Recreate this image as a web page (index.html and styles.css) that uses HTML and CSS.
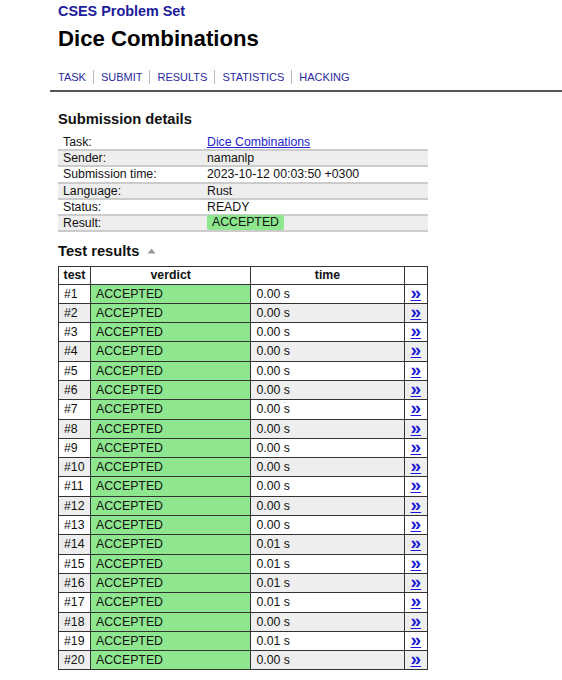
FILE: index.html
```html
<!DOCTYPE html>
<html lang="en">
<head>
  <meta charset="UTF-8">
  <title>CSES - Dice Combinations - Results</title>
  <link rel="stylesheet" href="styles.css">
</head>
<body>
  <div class="header">
    <a class="site-title" href="#">CSES Problem Set</a>
    <h1>Dice Combinations</h1>
    <div class="nav">
      <a href="#">TASK</a><span class="sep"></span>
      <a href="#">SUBMIT</a><span class="sep"></span>
      <a href="#">RESULTS</a><span class="sep"></span>
      <a href="#">STATISTICS</a><span class="sep"></span>
      <a href="#">HACKING</a>
    </div>
  </div>

  <div class="content">
    <h2>Submission details</h2>
    <table class="summary">
      <tr><td>Task:</td><td><a href="#">Dice Combinations</a></td></tr>
      <tr><td>Sender:</td><td>namanlp</td></tr>
      <tr><td>Submission time:</td><td>2023-10-12 00:03:50 +0300</td></tr>
      <tr><td>Language:</td><td>Rust</td></tr>
      <tr><td>Status:</td><td>READY</td></tr>
      <tr><td>Result:</td><td><span class="verdict-badge">ACCEPTED</span></td></tr>
    </table>

    <h2 class="toggle">Test results
      <svg class="arrow" width="9" height="6" viewBox="0 0 9 6"><path d="M0.5 5.5 L4.5 0.5 L8.5 5.5 Z" fill="#999"/></svg>
    </h2>
    <table class="tests">
      <tr><th>test</th><th>verdict</th><th>time</th><th class="link-col"></th></tr>
      <tr><td>#1</td><td class="ok">ACCEPTED</td><td>0.00 s</td><td class="more"><a href="#">&raquo;</a></td></tr>
      <tr><td>#2</td><td class="ok">ACCEPTED</td><td>0.00 s</td><td class="more"><a href="#">&raquo;</a></td></tr>
      <tr><td>#3</td><td class="ok">ACCEPTED</td><td>0.00 s</td><td class="more"><a href="#">&raquo;</a></td></tr>
      <tr><td>#4</td><td class="ok">ACCEPTED</td><td>0.00 s</td><td class="more"><a href="#">&raquo;</a></td></tr>
      <tr><td>#5</td><td class="ok">ACCEPTED</td><td>0.00 s</td><td class="more"><a href="#">&raquo;</a></td></tr>
      <tr><td>#6</td><td class="ok">ACCEPTED</td><td>0.00 s</td><td class="more"><a href="#">&raquo;</a></td></tr>
      <tr><td>#7</td><td class="ok">ACCEPTED</td><td>0.00 s</td><td class="more"><a href="#">&raquo;</a></td></tr>
      <tr><td>#8</td><td class="ok">ACCEPTED</td><td>0.00 s</td><td class="more"><a href="#">&raquo;</a></td></tr>
      <tr><td>#9</td><td class="ok">ACCEPTED</td><td>0.00 s</td><td class="more"><a href="#">&raquo;</a></td></tr>
      <tr><td>#10</td><td class="ok">ACCEPTED</td><td>0.00 s</td><td class="more"><a href="#">&raquo;</a></td></tr>
      <tr><td>#11</td><td class="ok">ACCEPTED</td><td>0.00 s</td><td class="more"><a href="#">&raquo;</a></td></tr>
      <tr><td>#12</td><td class="ok">ACCEPTED</td><td>0.00 s</td><td class="more"><a href="#">&raquo;</a></td></tr>
      <tr><td>#13</td><td class="ok">ACCEPTED</td><td>0.00 s</td><td class="more"><a href="#">&raquo;</a></td></tr>
      <tr><td>#14</td><td class="ok">ACCEPTED</td><td>0.01 s</td><td class="more"><a href="#">&raquo;</a></td></tr>
      <tr><td>#15</td><td class="ok">ACCEPTED</td><td>0.01 s</td><td class="more"><a href="#">&raquo;</a></td></tr>
      <tr><td>#16</td><td class="ok">ACCEPTED</td><td>0.01 s</td><td class="more"><a href="#">&raquo;</a></td></tr>
      <tr><td>#17</td><td class="ok">ACCEPTED</td><td>0.01 s</td><td class="more"><a href="#">&raquo;</a></td></tr>
      <tr><td>#18</td><td class="ok">ACCEPTED</td><td>0.00 s</td><td class="more"><a href="#">&raquo;</a></td></tr>
      <tr><td>#19</td><td class="ok">ACCEPTED</td><td>0.01 s</td><td class="more"><a href="#">&raquo;</a></td></tr>
      <tr><td>#20</td><td class="ok">ACCEPTED</td><td>0.00 s</td><td class="more"><a href="#">&raquo;</a></td></tr>
    </table>
  </div>
</body>
</html>
```

FILE: styles.css
```css
body {
  margin: 0;
  font-family: "Liberation Sans", Arial, sans-serif;
  font-size: 12.3px;
  color: #111;
  background: #fff;
}

.header {
  margin-left: 50px;
  padding-left: 8px;
  padding-top: 2px;
  border-bottom: 2px solid #555;
}

.site-title {
  display: block;
  font-size: 14.4px;
  line-height: 18px;
  font-weight: bold;
  color: #1c1c9a;
  text-decoration: none;
}

.header h1 {
  margin: 6px 0 0;
  font-size: 22.2px;
  line-height: 26px;
  color: #000;
}

.nav {
  margin-top: 18px;
  padding-bottom: 6px;
  display: flex;
  align-items: center;
  font-size: 11px;
  line-height: 14px;
}

.nav a {
  color: #2a2aa0;
  text-decoration: none;
}

.nav .sep {
  width: 1px;
  height: 14px;
  background: #bbb;
  margin: 0 7px;
}

.content {
  padding-left: 58px;
}

.content h2 {
  margin: 18px 0 7px;
  font-size: 14.7px;
  line-height: 18px;
  color: #111;
}

.content h2.toggle {
  margin: 10px 0 6px;
}

.arrow {
  margin-left: 4px;
  vertical-align: 2px;
}

table {
  border-collapse: collapse;
}

.summary {
  width: 370px;
}

.summary td {
  padding: 0 5px;
  line-height: 14.2px;
  border-bottom: 2px solid #ccc;
}

.summary td:first-child {
  width: 134px;
}

.summary tr:nth-child(even) td {
  background: #eee;
}

.summary a {
  color: #2323d0;
}

.verdict-badge {
  display: inline-block;
  background: #8ee68e;
  padding: 0 5px;
  line-height: 15px;
  margin-top: -1px;
  vertical-align: top;
  border-radius: 2px;
}

.tests {
  width: 370px;
  border: 1px solid #333;
}

.tests th,
.tests td {
  border: 1px solid #333;
  padding: 2px 5px;
  line-height: 14.3px;
  text-align: left;
}

.tests th {
  text-align: center;
  padding: 1px 4px;
}

.tests th:nth-child(1) { width: 22px; }
.tests th:nth-child(2) { width: 149px; }
.tests th:nth-child(3) { width: 142px; }
.tests th.link-col { width: 14px; }

.tests tr:nth-child(odd) td {
  background: #eee;
}

.tests td.ok {
  background: #8ee68e !important;
}

.tests td.more {
  text-align: center;
  padding: 0 2px;
}

.more a {
  color: #1a1ad6;
  font-weight: bold;
  font-size: 19px;
  line-height: 14px;
}
```
